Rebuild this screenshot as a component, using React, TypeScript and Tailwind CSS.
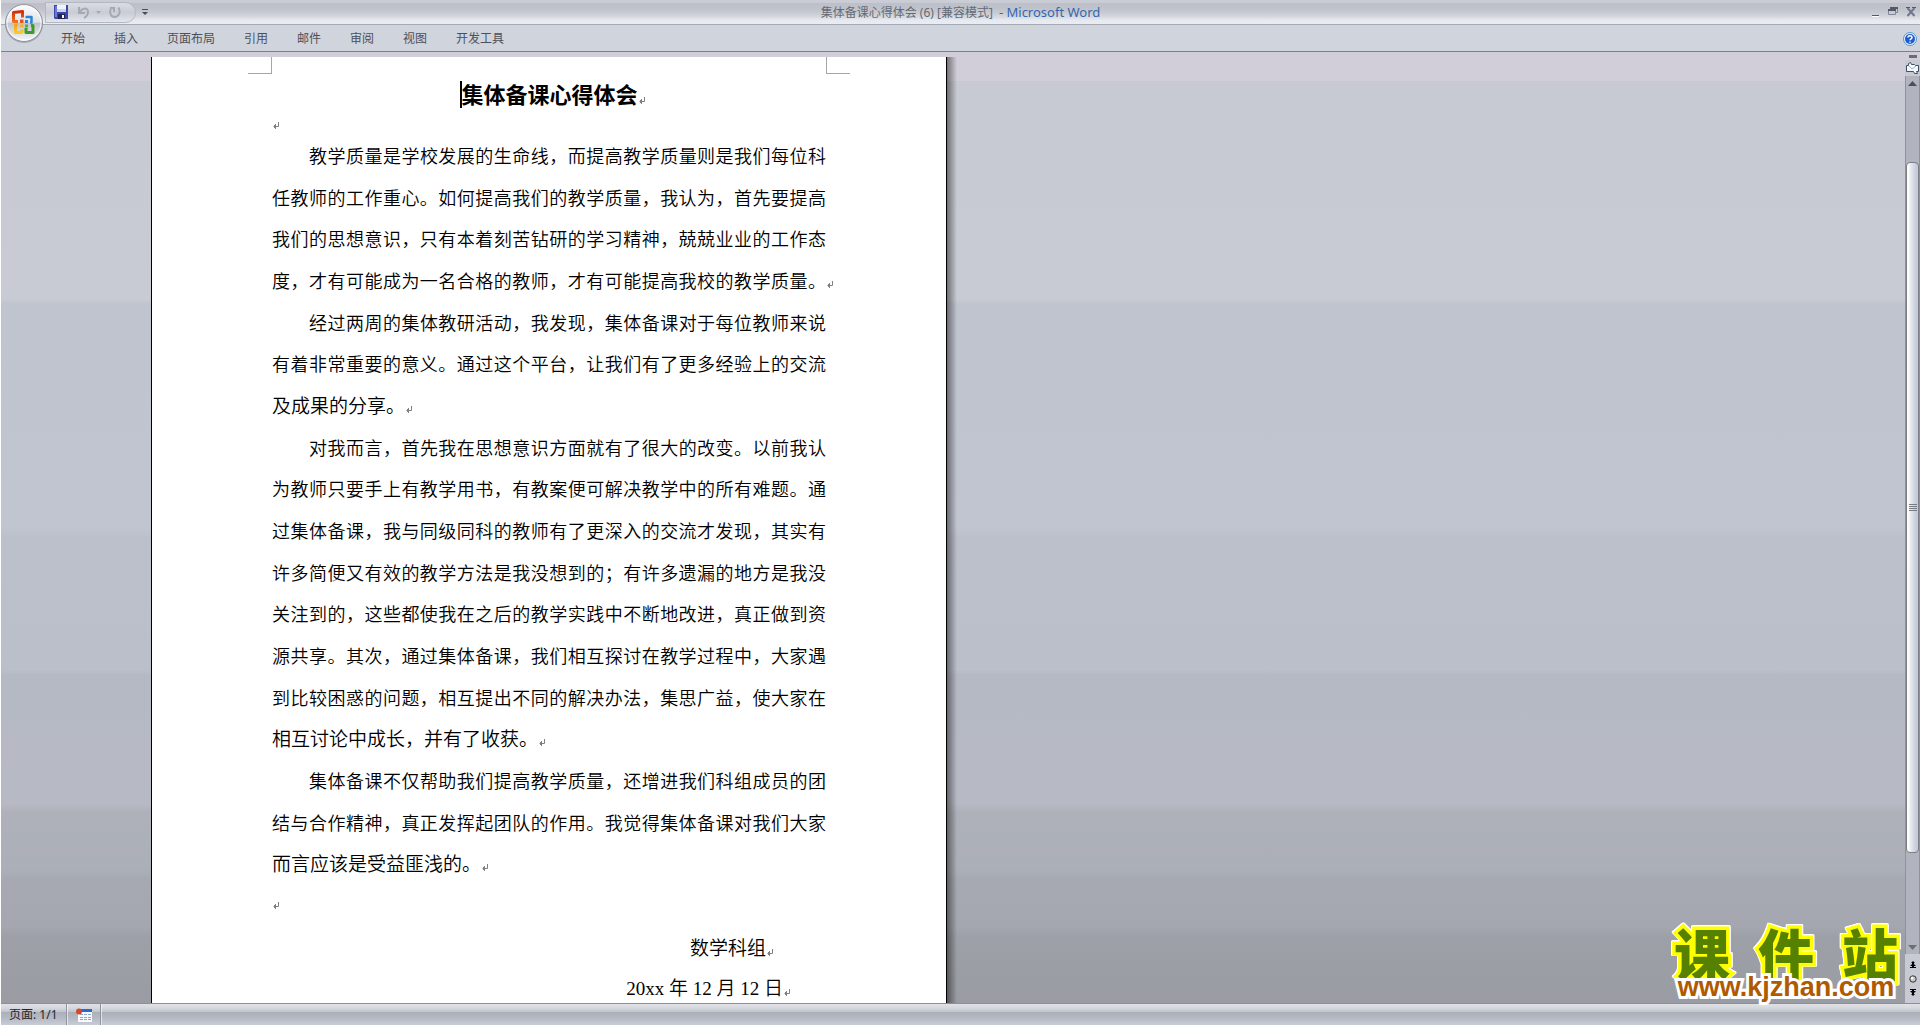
import React from 'react';

const tabs = ['开始', '插入', '页面布局', '引用', '邮件', '审阅', '视图', '开发工具'];

type Line = { text: string; indent?: boolean; end?: 'full' | 'short' };

const paragraphs: Line[][] = [
  [
    { text: '教学质量是学校发展的生命线，而提高教学质量则是我们每位科', indent: true },
    { text: '任教师的工作重心。如何提高我们的教学质量，我认为，首先要提高' },
    { text: '我们的思想意识，只有本着刻苦钻研的学习精神，兢兢业业的工作态' },
    { text: '度，才有可能成为一名合格的教师，才有可能提高我校的教学质量。', end: 'full' },
  ],
  [
    { text: '经过两周的集体教研活动，我发现，集体备课对于每位教师来说', indent: true },
    { text: '有着非常重要的意义。通过这个平台，让我们有了更多经验上的交流' },
    { text: '及成果的分享。', end: 'short' },
  ],
  [
    { text: '对我而言，首先我在思想意识方面就有了很大的改变。以前我认', indent: true },
    { text: '为教师只要手上有教学用书，有教案便可解决教学中的所有难题。通' },
    { text: '过集体备课，我与同级同科的教师有了更深入的交流才发现，其实有' },
    { text: '许多简便又有效的教学方法是我没想到的；有许多遗漏的地方是我没' },
    { text: '关注到的，这些都使我在之后的教学实践中不断地改进，真正做到资' },
    { text: '源共享。其次，通过集体备课，我们相互探讨在教学过程中，大家遇' },
    { text: '到比较困惑的问题，相互提出不同的解决办法，集思广益，使大家在' },
    { text: '相互讨论中成长，并有了收获。', end: 'short' },
  ],
  [
    { text: '集体备课不仅帮助我们提高教学质量，还增进我们科组成员的团', indent: true },
    { text: '结与合作精神，真正发挥起团队的作用。我觉得集体备课对我们大家' },
    { text: '而言应该是受益匪浅的。', end: 'short' },
  ],
];

function Mark() {
  return (
    <span className="inline-block w-0 overflow-visible">
      <svg width="8" height="8" viewBox="0 0 8 8" className="block max-w-none" aria-hidden="true">
        <path d="M6.5 0v4.5H1.5M3.5 2v5M2.5 3v3" fill="none" stroke="#808080" />
      </svg>
    </span>
  );
}

function OfficeOrb() {
  return (
    <svg width="42" height="42" viewBox="0 0 42 42" aria-hidden="true">
      <defs>
        <linearGradient id="orb" x1="0" y1="0" x2="0" y2="1">
          <stop offset="0" stopColor="#fdfdfe" />
          <stop offset="0.48" stopColor="#dfe1e6" />
          <stop offset="0.5" stopColor="#bfc2ca" />
          <stop offset="1" stopColor="#f7f8fa" />
        </linearGradient>
        <linearGradient id="red" x1="0" y1="0" x2="0" y2="1">
          <stop offset="0" stopColor="#cf2f0a" />
          <stop offset="1" stopColor="#f0701c" />
        </linearGradient>
        <linearGradient id="yellow" x1="0" y1="0" x2="0" y2="1">
          <stop offset="0" stopColor="#f6a312" />
          <stop offset="1" stopColor="#fbc829" />
        </linearGradient>
      </defs>
      <circle cx="21" cy="22" r="19" fill="#8b8f98" opacity="0.6" />
      <circle cx="21" cy="21" r="18.5" fill="url(#orb)" stroke="#8f939c" />
      <circle cx="21" cy="21" r="17" fill="none" stroke="#fff" opacity="0.8" />
      <g fill="none" strokeLinejoin="round">
        <path d="M15 19.500h-4.500v-9l9-1v6" stroke="url(#red)" strokeWidth="3" />
        <path d="M22.500 15h6v5.500h-1.500" stroke="#2b84d6" strokeWidth="2.500" />
        <path d="M14.500 23h-2v7.500h6.500v-3" stroke="url(#yellow)" strokeWidth="3" />
        <path d="M23 26v4.500h7v-7h-2" stroke="#3f9a2c" strokeWidth="3" />
      </g>
      <path d="M17 17.500h3.500v3.500H17z" fill="#e8541a" />
      <path d="M22 18h3v3h-3z" fill="#2b84d6" />
      <path d="M17 22.500h3.500v3H17z" fill="#f6b31c" />
      <path d="M22 22.500h3v3h-3z" fill="#5cae3a" />
    </svg>
  );
}

function SaveIcon() {
  return (
    <svg width="14" height="14" viewBox="0 0 14 14" aria-hidden="true">
      <path d="M0 0h14v14H1l-1-1z" fill="#3c46a8" />
      <path d="M1 1h2v11H1z" fill="#6c78d8" />
      <path d="M3 0h9v7H3z" fill="#eef3fd" />
      <path d="M3 4h9v3H3z" fill="#c5d6f4" />
      <path d="M4 9h7v5H4z" fill="#1f2452" />
      <path d="M8 10h2v3H8z" fill="#fff" />
    </svg>
  );
}

function TitleBar() {
  return (
    <header className="flex h-6 shrink-0 items-center bg-[linear-gradient(#cbced6_0,#c8cbd4_3px,#bcc0c9_3px,#bfc2cb_8px,#c6c9d1_12px,#d6d9df_17px,#e6e9f0_20px,#e9ecf3_24px)]">
      <div className="flex flex-1 items-center">
        <div className="ml-11 flex h-[21px] w-[91px] items-center rounded-r-full border border-[#b3b7c2] bg-[linear-gradient(#d9dce3,#c9ccd4_50%,#e3e6ed)] pl-2">
          <button aria-label="保存"><SaveIcon /></button>
          <button aria-label="撤消" className="ml-2.5">
            <svg width="12" height="13" viewBox="0 0 12 13" aria-hidden="true">
              <path d="M1 1v6h6M2 6c2-4 8-5 8 0 0 3-2 5-4 6" fill="none" stroke="#a5a9b6" strokeWidth="2" />
            </svg>
          </button>
          <button aria-label="撤消列表" className="ml-1.5">
            <svg width="5" height="3" viewBox="0 0 5 3" aria-hidden="true"><path d="M0 0h5L2.500 3z" fill="#a5a9b6" /></svg>
          </button>
          <button aria-label="重复" className="ml-2">
            <svg width="12" height="12" viewBox="0 0 12 12" aria-hidden="true">
              <path d="M2.500 1.500C0 5 1 11 5.500 11S12 6 9.500 1.500M1 2h4v4" fill="none" stroke="#a5a9b6" strokeWidth="2" />
            </svg>
          </button>
        </div>
        <button aria-label="自定义快速访问工具栏" className="ml-1.5">
          <svg width="6" height="6" viewBox="0 0 6 6" aria-hidden="true">
            <path d="M0 0h6v1H0zM0 3h6L3 6z" fill="#4a4e57" />
          </svg>
        </button>
      </div>
      <h1 className="flex items-center gap-1.5 pt-0.5 pl-1 text-[12px] text-[#666a75]">
        <span>集体备课心得体会 (6) [兼容模式]</span>
        <span className="text-[13px] text-[#3567b0]">- Microsoft Word</span>
      </h1>
      <div className="flex flex-1 items-center justify-end gap-2 pr-1">
        <button aria-label="最小化">
          <svg width="9" height="10" viewBox="0 0 9 10" aria-hidden="true">
            <path d="M1 8h7v1H1z" fill="#555963" /><path d="M1 9h7v1H1z" fill="#fff" />
          </svg>
        </button>
        <button aria-label="还原">
          <svg width="10" height="10" viewBox="0 0 10 10" aria-hidden="true">
            <path d="M2.500 3V1.500h7v4H8M.500 3.500h7v4h-7z" fill="none" stroke="#7e8798" />
            <path d="M2 0h8v2H2zM0 2h8v2H0z" fill="#555963" />
          </svg>
        </button>
        <button aria-label="关闭">
          <svg width="10" height="10" viewBox="0 0 10 10" aria-hidden="true">
            <path d="M1.500 1l7 8M8.500 1l-7 8" stroke="#70788a" strokeWidth="2" />
            <path d="M0 0h4v1H0zM6 0h4v1H6z" fill="#555963" />
          </svg>
        </button>
      </div>
    </header>
  );
}

function Ribbon() {
  return (
    <nav className="flex h-7 shrink-0 items-center border-y border-t-[#a5a9b3] border-b-[#7b7f88] bg-[#d0d4dd] pt-0.5 pl-[60px] text-[12px] text-[#4c5059]">
      <div className="flex flex-1 gap-[29px]">
        {tabs.map((tab) => (
          <button key={tab}>{tab}</button>
        ))}
      </div>
      <button aria-label="帮助" className="mr-[3px]">
        <svg width="14" height="14" viewBox="0 0 14 14" aria-hidden="true">
          <circle cx="7" cy="7" r="6.500" fill="#e4f0fb" stroke="#5b95d0" />
          <circle cx="7" cy="7" r="5" fill="#1d5ccd" />
          <path d="M5 5.500c0-2.500 4-2.500 4 0 0 1.500-2 1.200-2 2.800M7 9.500v1.200" fill="none" stroke="#fff" strokeWidth="1.500" />
        </svg>
      </button>
    </nav>
  );
}

function DocumentLine({ line }: { line: Line }) {
  const size = line.end === 'short' ? 'text-[19px]' : 'flex-1 text-[18px] [text-align-last:justify]';
  return (
    <span className={`flex min-h-0 flex-1 items-center whitespace-nowrap ${line.indent ? 'pl-[37px]' : ''}`}>
      <span className={size}>{line.text}</span>
      {line.end && <span className="pt-1"><Mark /></span>}
    </span>
  );
}

function Page() {
  return (
    <article className="relative ml-[150px] flex w-[796px] flex-col overflow-hidden border-x border-black bg-white px-[120px] pt-5 font-[350] text-black">
      <div className="absolute top-0 left-[96px] h-[17px] w-6 border-r border-b border-[#a6a6a6]" />
      <div className="absolute top-0 right-[96px] h-[17px] w-6 border-b border-l border-[#a6a6a6]" />
      <h2 className="flex h-9 shrink-0 items-center justify-center pb-0.5 text-[22px] font-bold">
        <span className="-mr-px h-[27px] w-0.5 bg-black" />
        集体备课心得体会
        <span className="pt-1"><Mark /></span>
      </h2>
      <p className="flex h-[22px] shrink-0 items-center pt-1"><Mark /></p>
      <div className="-mb-[7px] flex flex-1 flex-col leading-7">
        {paragraphs.map((lines, i) => (
          <p key={i} className="contents">
            {lines.map((line) => (
              <DocumentLine key={line.text} line={line} />
            ))}
          </p>
        ))}
        <p className="flex flex-1 items-center"><Mark /></p>
        <p className="flex flex-1 items-center justify-end pr-[60px] text-[19px]">
          数学科组<span className="pt-1"><Mark /></span>
        </p>
        <p className="flex flex-1 items-center justify-end pr-[43px] font-['Liberation_Serif','Noto_Sans_CJK_SC',serif] text-[19px]">
          20xx 年 12 月 12 日<span className="pt-1"><Mark /></span>
        </p>
      </div>
    </article>
  );
}

function ScrollBar() {
  return (
    <aside className="flex w-[15px] shrink-0 flex-col items-stretch bg-[#c8cad3]">
      <div className="flex h-2 items-center justify-center bg-[#d2ced9]">
        <span className="h-[3px] w-2 bg-[#6b6b70]" />
      </div>
      <button aria-label="标尺" className="flex h-4 items-center justify-center">
        <svg width="13" height="12" viewBox="0 0 13 12" aria-hidden="true">
          <path d="M.500 3.500h2v-2l2-1 1 2h3l1 1h3v6h-2l1 2h-3l-1-2h-7z" fill="#f4f7fb" stroke="#3d5066" />
          <path d="M3 4l3 3 4-3" fill="none" stroke="#aab4c2" />
        </svg>
      </button>
      <div className="flex flex-1 flex-col border-x border-[#8f929b] bg-[#b1b4be]">
        <button aria-label="向上滚动" className="flex h-3.5 items-center justify-center">
          <svg width="9" height="5" viewBox="0 0 9 5" aria-hidden="true"><path d="M0 5l4.500-5L9 5z" fill="#4b4f58" /></svg>
        </button>
        <div className="grow-[73]" />
        <div className="flex grow-[689] flex-col items-center justify-center gap-px rounded-sm border border-[#7b7e87] bg-[linear-gradient(90deg,#fffdf0_0,#fffdf0_2px,#e9edf4_3px,#d9dde8_6px,#c3c7d3_10px,#d0d4de_100%)]">
          <span className="h-px w-2 bg-[#777b86]" />
          <span className="h-px w-2 bg-[#777b86]" />
          <span className="h-px w-2 bg-[#777b86]" />
          <span className="h-px w-2 bg-[#777b86]" />
        </div>
        <div className="grow-[88]" />
        <button aria-label="向下滚动" className="flex h-3.5 items-center justify-center">
          <svg width="9" height="5" viewBox="0 0 9 5" aria-hidden="true"><path d="M0 0l4.500 5L9 0z" fill="#6b6f79" /></svg>
        </button>
      </div>
      <div className="flex h-[49px] flex-col items-center justify-evenly">
        <button aria-label="前一页">
          <svg width="6" height="7" viewBox="0 0 6 7" aria-hidden="true">
            <path d="M3 0l2 2H1zM3 2l3 3H0zM2 2h2v4H2zM0 6h6v1H0z" fill="#000" />
          </svg>
        </button>
        <button aria-label="选择浏览对象">
          <svg width="8" height="8" viewBox="0 0 8 8" aria-hidden="true">
            <circle cx="4" cy="4" r="3.200" fill="#c9c9c9" stroke="#333" />
            <circle cx="3" cy="3" r="1.200" fill="#fff" />
          </svg>
        </button>
        <button aria-label="下一页">
          <svg width="6" height="7" viewBox="0 0 6 7" aria-hidden="true">
            <path d="M0 0h6v1H0zM0 2h6L3 5zM2 1h2v4H2zM1 5h4L3 7z" fill="#000" />
          </svg>
        </button>
      </div>
    </aside>
  );
}

function Watermark() {
  return (
    <div className="pointer-events-none absolute right-5 bottom-1 w-[228px]">
      <div className="flex justify-between px-0.5 text-[56px] leading-[42px] font-black text-[#558000] [-webkit-text-stroke:7px_#ffff00] [filter:drop-shadow(1px_0_0_#fff)_drop-shadow(-1px_0_0_#fff)_drop-shadow(0_-1px_0_#fff)] [paint-order:stroke_fill]">
        <span>课</span>
        <span>件</span>
        <span>站</span>
      </div>
      <p className="relative text-center font-['Liberation_Sans',Arial,sans-serif] text-[27px] leading-6 font-bold text-[#b05a00] [-webkit-text-stroke:6px_#fff] [paint-order:stroke_fill]">
        www.kjzhan.com
      </p>
    </div>
  );
}

function StatusBar() {
  return (
    <footer className="flex h-[22px] shrink-0 items-stretch border-t border-[#8b8f98] bg-[linear-gradient(#e0e2e8_0,#d5d8de_4px,#bfc3cc_8px,#abafba_8px,#b5b9c4_14px,#c8ccd5_21px)] text-[12px] text-[#24262b]">
      <button className="border-r border-[#8f939d] pr-2 pl-2">页面: 1/1</button>
      <button aria-label="宏录制" className="flex w-[34px] items-center justify-center border-r border-l border-r-[#8f939d] border-l-white/60">
        <svg width="16" height="14" viewBox="0 0 16 14" aria-hidden="true">
          <path d="M2 1h14v13H2z" fill="#f5f8fd" />
          <path d="M2 1h14v3H2z" fill="#2f66d0" />
          <path d="M4 6h3v1H4zM8 6h3v1H8zM12 6h3v1h-3zM4 9h3v1H4zM8 9h3v1H8zM12 9h3v1h-3zM4 11h3v1H4zM8 11h3v1H8zM12 11h3v1h-3z" fill="#94a6c6" />
          <circle cx="3" cy="3.500" r="3" fill="#d2492c" />
        </svg>
      </button>
      <div className="flex-1 border-l border-white/60" />
    </footer>
  );
}

export default function App() {
  return (
    <div className="relative flex h-screen min-h-[640px] flex-col overflow-hidden border-l border-white bg-[#d0d4dd] font-['Noto_Sans','Noto_Sans_CJK_SC',sans-serif]">
      <TitleBar />
      <Ribbon />
      <div className="absolute top-0.5 left-0.5 flex">
        <button aria-label="Office 按钮"><OfficeOrb /></button>
      </div>
      <main className="relative flex min-h-0 flex-1 bg-[linear-gradient(#d2ced9_3%,#c7cad3_3%,#c8cbd4_26%,#c0c4ce_26.500%,#c1c5cf_50%,#bcc0ca_51%,#bbbfc9_65%,#b5b9c3_65.500%,#b7bac4_79%,#aeb1b9_80%,#abafb7_86%,#a6a9b1_87%,#a4a7af_92%,#9da0a7_93%,#999ca3_100%)]">
        <div className="flex flex-1 pt-[5px]">
          <Page />
          <div className="w-2.5 bg-linear-to-r from-black/45 to-transparent" />
        </div>
        <ScrollBar />
        <Watermark />
      </main>
      <StatusBar />
    </div>
  );
}
